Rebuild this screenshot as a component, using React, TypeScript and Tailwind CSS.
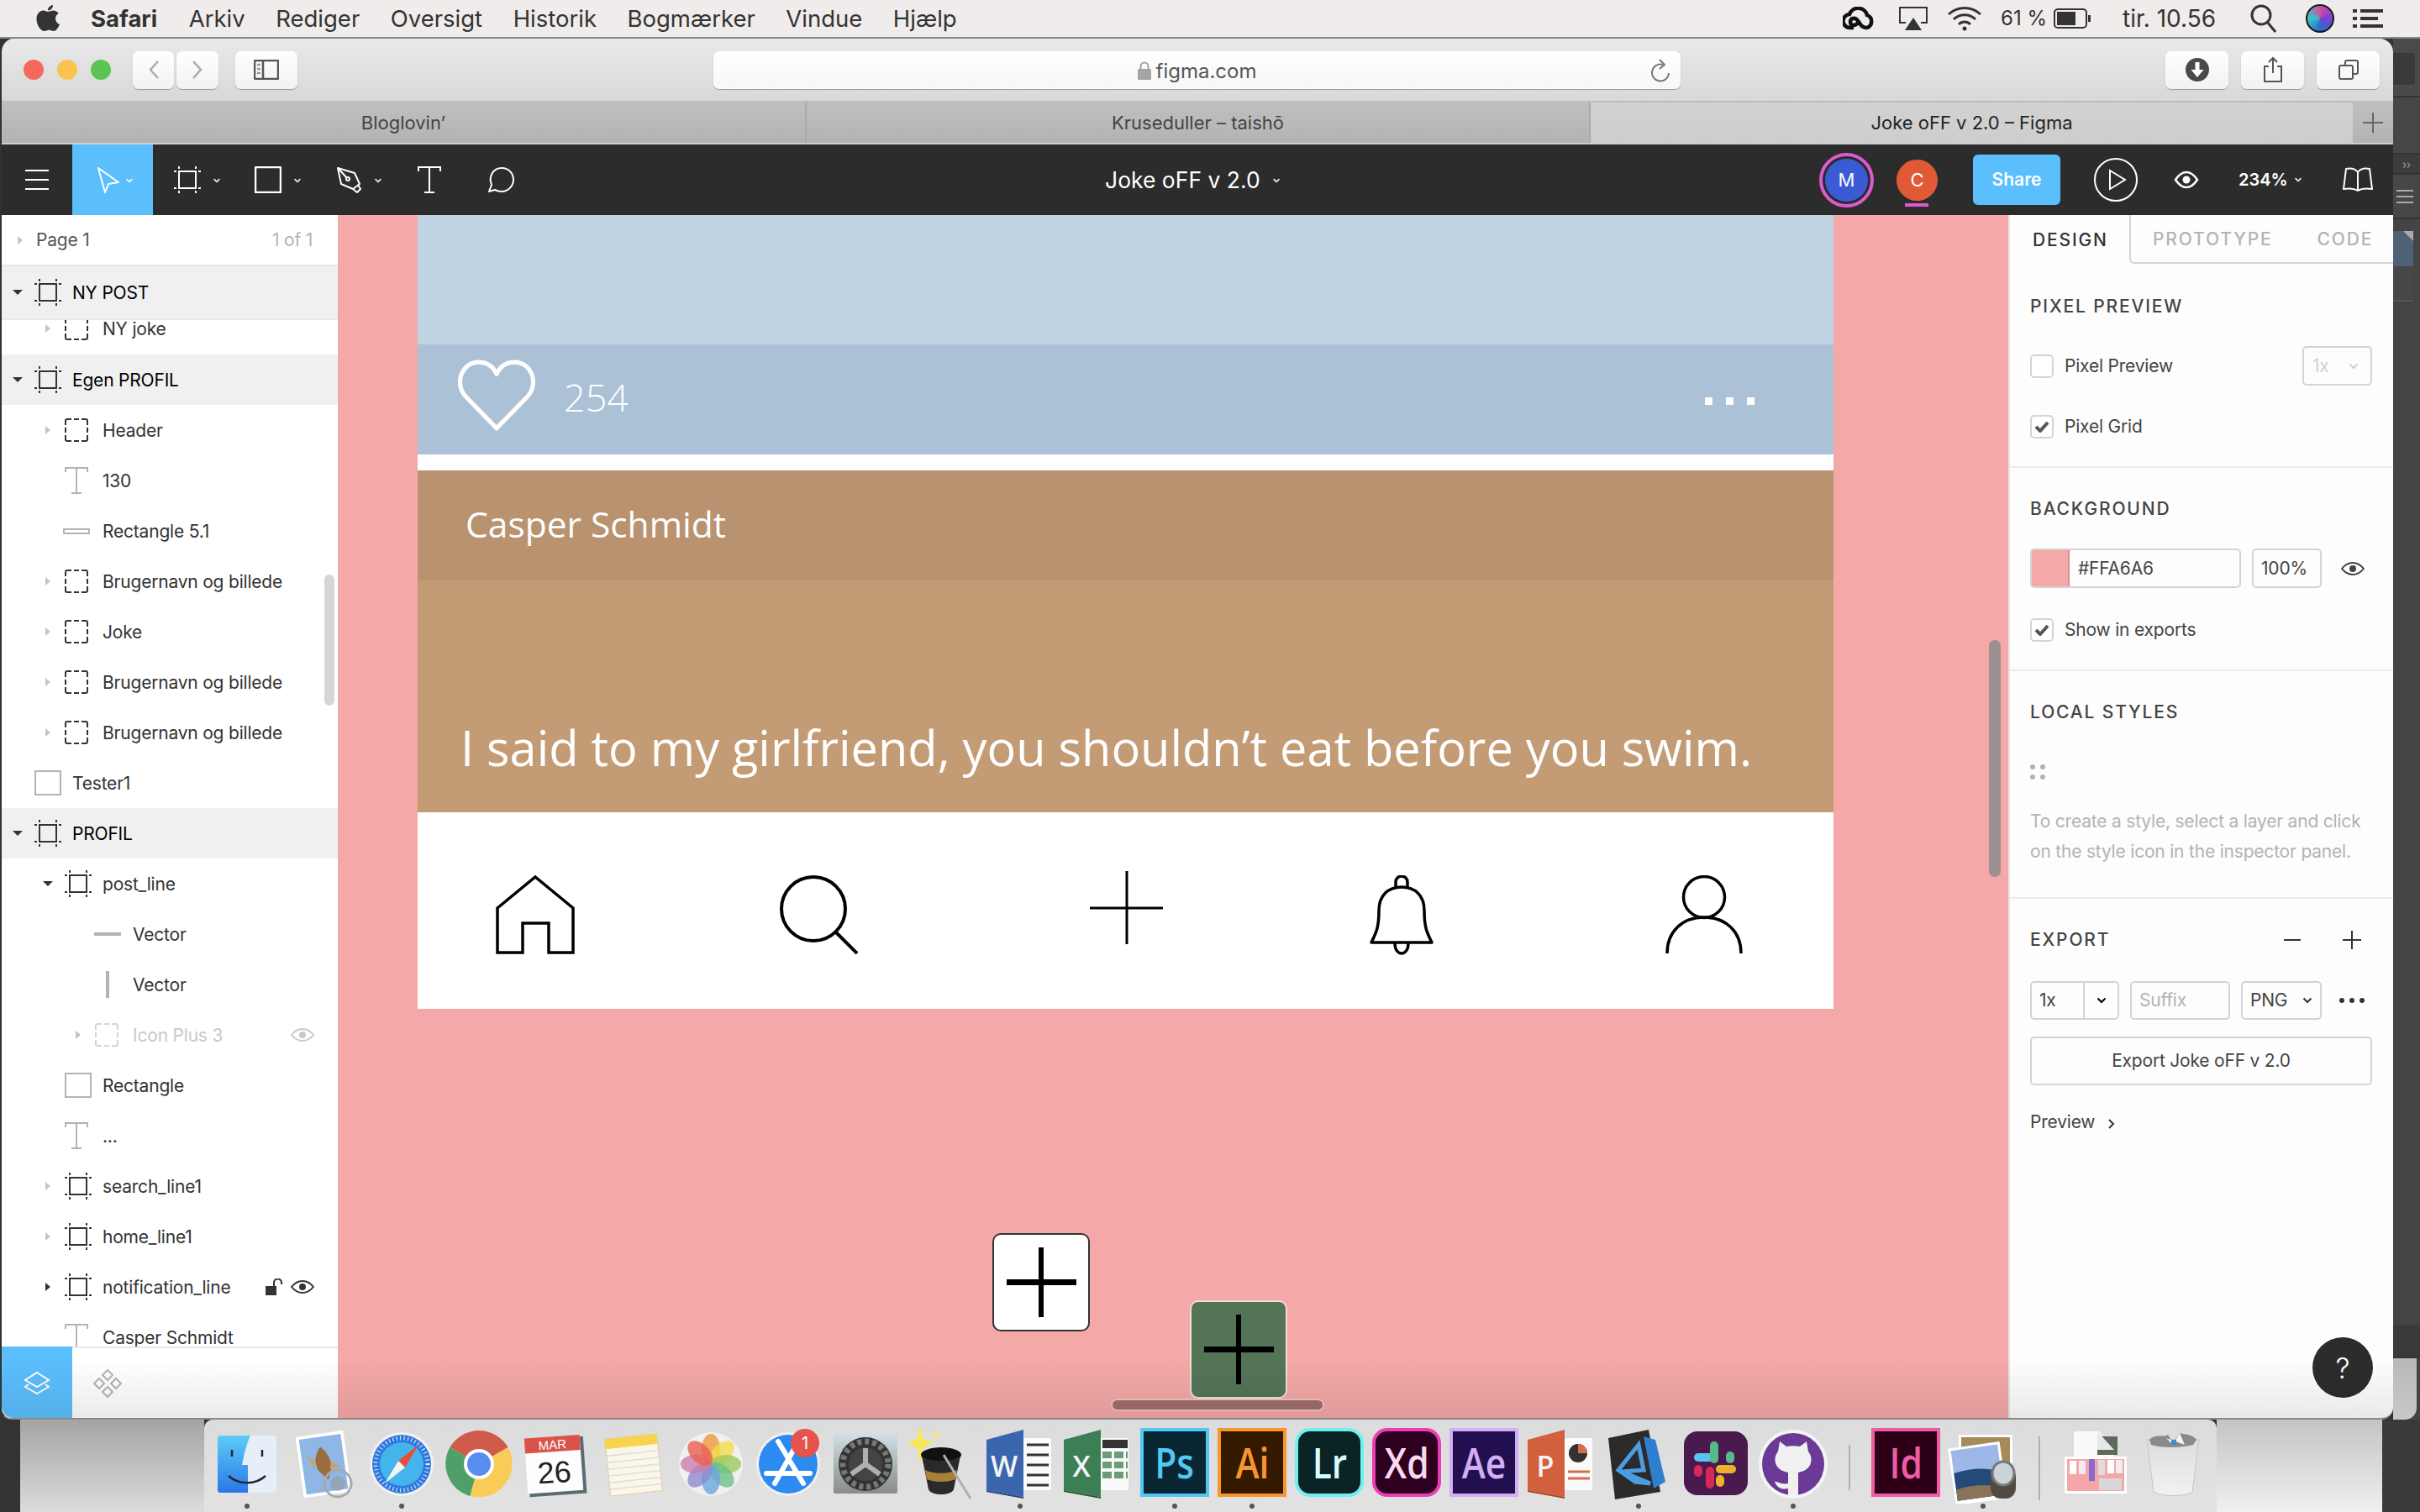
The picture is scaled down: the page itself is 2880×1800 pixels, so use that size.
import type { ReactNode } from "react";

const sans = "font-['Inter','Noto_Sans',sans-serif]";
const ui = "text-[21px] tracking-[-0.2px]";

const Caret = ({ className = "" }: { className?: string }) => (
    <svg width="12" height="8" viewBox="0 0 12 8" className={className} fill="none" stroke="currentColor" strokeWidth="2">
        <path d="M1.5 1.5 6 6l4.5-4.5" />
    </svg>
);

const Triangle = ({ open, tone = "text-[#c4c4c4]" }: { open?: boolean; tone?: string }) =>
    open ? (
        <svg width="12" height="8" viewBox="0 0 12 8" className="text-[#333]">
            <path d="M0 1h12L6 7z" fill="currentColor" />
        </svg>
    ) : (
        <svg width="12" height="12" viewBox="0 0 12 12" className={tone}>
            <path d="M3 1l6 5-6 5z" fill="currentColor" />
        </svg>
    );

const FrameIcon = ({ className = "text-[#333]" }: { className?: string }) => (
    <svg width="32" height="32" viewBox="0 0 32 32" className={className} fill="none" stroke="currentColor" strokeWidth="2">
        <rect x="6" y="6" width="20" height="20" />
        <path d="M0 6h3M29 6h3M0 26h3M29 26h3M6 0v3M26 0v3M6 29v3M26 29v3" />
    </svg>
);

const GroupIcon = ({ muted }: { muted?: boolean }) => (
    <svg width="28" height="28" viewBox="0 0 28 28" className={muted ? "text-[#d4d4d4]" : "text-[#333]"} fill="none" stroke="currentColor" strokeWidth="2">
        <path d="M1 8V3a2 2 0 0 1 2-2h5M11 1h6M20 1h5a2 2 0 0 1 2 2v5M27 11v6M27 20v5a2 2 0 0 1-2 2h-5M17 27h-6M8 27H3a2 2 0 0 1-2-2v-5M1 17v-6" />
    </svg>
);

const TextIcon = () => (
    <svg width="28" height="32" viewBox="0 0 28 32" className="text-[#b3b3b3]" fill="none" stroke="currentColor" strokeWidth="2">
        <path d="M1 6V1h26v5M14 1v30M8 31h12" />
    </svg>
);

const RectIcon = ({ w = 32 }: { w?: number }) => (
    <svg width={w} height="30" viewBox={`0 0 ${w} 30`} className="text-[#b3b3b3]" fill="none" stroke="currentColor" strokeWidth="2">
        <rect x="1" y="1" width={w - 2} height="28" />
    </svg>
);

const EyeIcon = ({ className = "text-[#333]" }: { className?: string }) => (
    <svg width="28" height="16" viewBox="0 0 28 16" className={className} fill="none" stroke="currentColor" strokeWidth="2">
        <path d="M1 8c4-5 8-7 13-7s9 2 13 7c-4 5-8 7-13 7S5 13 1 8z" />
        <circle cx="14" cy="8" r="4" fill="currentColor" stroke="none" />
    </svg>
);

type Expand = "open" | "closed" | "dark" | "none";

const LayerRow = ({
    indent,
    expand = "none",
    icon,
    label,
    head,
    muted,
    extras,
    tall,
}: {
    indent: string;
    expand?: Expand;
    icon: ReactNode;
    label: string;
    head?: boolean;
    muted?: boolean;
    extras?: ReactNode;
    tall?: boolean;
}) => (
    <div className={`flex ${tall ? "h-[62px]" : "h-[60px]"} shrink-0 items-center ${indent} ${head ? "bg-[#f0f0f0] text-black" : muted ? "text-[#c8c8c8]" : "text-[#333]"}`}>
        <span className="mr-[13px] flex w-[12px] justify-center">
            {expand === "open" && <Triangle open />}
            {expand === "closed" && <Triangle />}
            {expand === "dark" && <Triangle tone="text-[#333]" />}
        </span>
        <span className="flex w-[46px] items-center pl-[1px]">{icon}</span>
        <span className={`${ui} leading-none`}>{label}</span>
        {extras}
    </div>
);

const LeftPanel = () => (
    <div className={`relative flex w-[400px] shrink-0 flex-col bg-white ${sans}`}>
        <div className={`flex h-[61px] shrink-0 items-center border-b-2 border-[#e8e8e8] pl-[16px] pr-[30px] ${ui} text-[#555]`}>
            <Triangle />
            <span className="ml-[13px]">Page 1</span>
            <span className="ml-auto text-[#b3b3b3]">1 of 1</span>
        </div>
        <LayerRow tall indent="pl-[13px]" expand="open" head icon={<FrameIcon />} label="NY POST" />
        <div className="h-[43px] shrink-0 overflow-hidden border-t-2 border-[#e8e8e8]">
            <div className="-mt-[20px]">
                <LayerRow indent="pl-[49px]" expand="closed" icon={<GroupIcon />} label="NY joke" />
            </div>
        </div>
        <div className="flex-1 overflow-hidden">
            <LayerRow indent="pl-[13px]" expand="open" head icon={<FrameIcon />} label="Egen PROFIL" />
            <LayerRow indent="pl-[49px]" expand="closed" icon={<GroupIcon />} label="Header" />
            <LayerRow indent="pl-[49px]" icon={<TextIcon />} label="130" />
            <LayerRow
                indent="pl-[49px]"
                icon={<span className="-ml-[2px] block h-[7px] w-[32px] border-2 border-[#b3b3b3]" />}
                label="Rectangle 5.1"
            />
            <LayerRow indent="pl-[49px]" expand="closed" icon={<GroupIcon />} label="Brugernavn og billede" />
            <LayerRow indent="pl-[49px]" expand="closed" icon={<GroupIcon />} label="Joke" />
            <LayerRow indent="pl-[49px]" expand="closed" icon={<GroupIcon />} label="Brugernavn og billede" />
            <LayerRow indent="pl-[49px]" expand="closed" icon={<GroupIcon />} label="Brugernavn og billede" />
            <LayerRow indent="pl-[13px]" icon={<RectIcon />} label="Tester1" />
            <LayerRow indent="pl-[13px]" expand="open" head icon={<FrameIcon />} label="PROFIL" />
            <LayerRow indent="pl-[49px]" expand="open" icon={<FrameIcon />} label="post_line" />
            <LayerRow indent="pl-[85px]" icon={<span className="-ml-[1px] block h-[4px] w-[32px] bg-[#b3b3b3]" />} label="Vector" />
            <LayerRow indent="pl-[85px]" icon={<span className="ml-[13px] block h-[32px] w-[4px] bg-[#b3b3b3]" />} label="Vector" />
            <LayerRow
                indent="pl-[85px]"
                expand="closed"
                muted
                icon={<GroupIcon muted />}
                label="Icon Plus 3"
                extras={<EyeIcon className="ml-auto mr-[28px] text-[#c8c8c8]" />}
            />
            <LayerRow indent="pl-[49px]" icon={<RectIcon />} label="Rectangle" />
            <LayerRow indent="pl-[49px]" icon={<TextIcon />} label="..." />
            <LayerRow indent="pl-[49px]" expand="closed" icon={<FrameIcon />} label="search_line1" />
            <LayerRow indent="pl-[49px]" expand="closed" icon={<FrameIcon />} label="home_line1" />
            <LayerRow
                indent="pl-[49px]"
                expand="dark"
                icon={<FrameIcon />}
                label="notification_line"
                extras={
                    <span className="ml-auto mr-[28px] flex items-center gap-[10px]">
                        <svg width="20" height="20" viewBox="0 0 20 20" className="text-[#333]">
                            <rect x="0" y="9" width="13" height="11" fill="currentColor" />
                            <path d="M10 9V5a4.500 4.500 0 0 1 9 0v2" fill="none" stroke="currentColor" strokeWidth="2" />
                        </svg>
                        <EyeIcon />
                    </span>
                }
            />
            <LayerRow indent="pl-[49px]" icon={<TextIcon />} label="Casper Schmidt" />
        </div>
        <div className="flex h-[85px] shrink-0 border-t-2 border-[#e8e8e8] bg-white">
            <div className="-mt-[2px] flex h-[85px] w-[84px] items-center justify-center rounded-bl-[14px] bg-[#5bbefd]">
                <svg width="32" height="32" viewBox="0 0 32 32" fill="none" stroke="#fff" strokeWidth="2">
                    <path d="M16 4 30 13 16 21 2 13z" />
                    <path d="M6 18l-4 3 14 8 14-8-4-3" />
                </svg>
            </div>
            <div className="flex w-[84px] items-center justify-center">
                <svg width="38" height="38" viewBox="0 0 38 38" fill="none" stroke="#b3b3b3" strokeWidth="2">
                    <path d="M19 3l6 6-6 6-6-6zM9 13l6 6-6 6-6-6zM29 13l6 6-6 6-6-6zM19 23l6 6-6 6-6-6z" />
                </svg>
            </div>
        </div>
        <div className="absolute left-[384px] top-[428px] h-[156px] w-[12px] rounded-full bg-[#d6d6d6]" />
    </div>
);

const SectionTitle = ({ children }: { children: ReactNode }) => (
    <div className="text-[21px] font-medium leading-[26px] tracking-[1.85px] text-[#444]">{children}</div>
);

const Check = ({ on }: { on?: boolean }) => (
    <span className="flex h-[28px] w-[28px] items-center justify-center rounded-[5px] border-2 border-[#d4d4d4] bg-white">
        {on && (
            <svg width="18" height="14" viewBox="0 0 18 14" fill="none" stroke="#555" strokeWidth="4">
                <path d="M2 7l5 5 9-10" />
            </svg>
        )}
    </span>
);

const RightPanel = () => (
    <div className={`relative flex w-[458px] shrink-0 flex-col border-l-2 border-[#e6e6e6] bg-[#fdfdfd] text-[#444] ${sans}`}>
        <div className="flex h-[58px] shrink-0 items-center text-[21px] font-medium leading-none tracking-[1.85px]">
            <div className="flex h-full w-[142px] items-center pl-[27px] text-[#333]">DESIGN</div>
            <div className="flex h-full flex-1 items-center rounded-bl-[6px] border-b-2 border-l-2 border-[#d4d4d4] pl-[26px] text-[#b3b3b3]">
                <span>PROTOTYPE</span>
                <span className="ml-[53px]">CODE</span>
            </div>
        </div>

        <div className="h-[243px] shrink-0 border-b-2 border-[#ececec] pl-[24px] pr-[25px] pt-[38px]">
            <SectionTitle>PIXEL PREVIEW</SectionTitle>
            <div className={`mt-[34px] flex h-[47px] items-center ${ui}`}>
                <Check />
                <span className="ml-[13px]">Pixel Preview</span>
                <span className="ml-auto flex h-[47px] w-[83px] items-center justify-between rounded-[5px] border-2 border-[#d4d4d4] px-[10px] text-[#d0d0d0]">
                    1x
                    <Caret className="mr-[4px] text-[#d0d0d0]" />
                </span>
            </div>
            <div className={`mt-[35px] flex h-[28px] items-center ${ui}`}>
                <Check on />
                <span className="ml-[13px]">Pixel Grid</span>
            </div>
        </div>

        <div className="h-[242px] shrink-0 border-b-2 border-[#ececec] pl-[24px] pr-[25px] pt-[36px]">
            <SectionTitle>BACKGROUND</SectionTitle>
            <div className={`mt-[34px] flex h-[47px] items-center ${ui}`}>
                <div className="flex h-[47px] w-[251px] overflow-hidden rounded-[5px] border-2 border-[#d4d4d4]">
                    <span className="-m-[2px] mr-0 block w-[47px] rounded-l-[5px] border-2 border-[#dc8a8a] bg-[#f4a8a7]" />
                    <span className="ml-[10px] self-center">#FFA6A6</span>
                </div>
                <div className="ml-[13px] flex h-[47px] w-[83px] items-center rounded-[5px] border-2 border-[#d4d4d4] pl-[9px]">100%</div>
                <EyeIcon className="ml-[23px]" />
            </div>
            <div className={`mt-[36px] flex h-[28px] items-center ${ui}`}>
                <Check on />
                <span className="ml-[13px]">Show in exports</span>
            </div>
        </div>

        <div className="h-[271px] shrink-0 border-b-2 border-[#ececec] pl-[24px] pr-[25px] pt-[36px]">
            <SectionTitle>LOCAL STYLES</SectionTitle>
            <div className="mt-[49px] grid w-[18px] grid-cols-2 gap-x-[6px] gap-y-[6px]">
                <span className="h-[6px] w-[6px] rounded-full bg-[#b3b3b3]" />
                <span className="h-[6px] w-[6px] rounded-full bg-[#b3b3b3]" />
                <span className="h-[6px] w-[6px] rounded-full bg-[#b3b3b3]" />
                <span className="h-[6px] w-[6px] rounded-full bg-[#b3b3b3]" />
            </div>
            <p className={`mt-[32px] ${ui} leading-[36px] text-[#b3b3b3]`}>
                To create a style, select a layer and click on the style icon in the inspector panel.
            </p>
        </div>

        <div className="flex-1 pl-[24px] pr-[25px] pt-[36px]">
            <div className="flex h-[26px] items-center">
                <SectionTitle>EXPORT</SectionTitle>
                <span className="ml-auto block h-[2px] w-[20px] bg-[#333]" />
                <svg width="22" height="22" viewBox="0 0 22 22" className="ml-[50px] mr-[13px]" fill="none" stroke="#333" strokeWidth="2">
                    <path d="M0 11h22M11 0v22" />
                </svg>
            </div>
            <div className={`mt-[36px] flex h-[46px] items-center ${ui}`}>
                <div className="flex h-[46px] w-[106px] rounded-[5px] border-2 border-[#d4d4d4]">
                    <span className="flex w-[63px] items-center border-r-2 border-[#d4d4d4] pl-[9px]">1x</span>
                    <span className="flex flex-1 items-center justify-center">
                        <Caret className="text-black" />
                    </span>
                </div>
                <div className="ml-[13px] flex h-[46px] w-[119px] items-center rounded-[5px] border-2 border-[#d4d4d4] pl-[9px] text-[#b3b3b3]">Suffix</div>
                <div className="ml-[13px] flex h-[46px] w-[96px] items-center justify-between rounded-[5px] border-2 border-[#d4d4d4] px-[9px]">
                    PNG
                    <Caret className="text-[#333]" />
                </div>
                <span className="ml-[21px] flex gap-[6px]">
                    <span className="h-[6px] w-[6px] rounded-full bg-[#333]" />
                    <span className="h-[6px] w-[6px] rounded-full bg-[#333]" />
                    <span className="h-[6px] w-[6px] rounded-full bg-[#333]" />
                </span>
            </div>
            <div className={`mt-[20px] flex h-[58px] items-center justify-center rounded-[5px] border-2 border-[#d4d4d4] ${ui}`}>Export Joke oFF v 2.0</div>
            <div className={`mt-[31px] flex h-[26px] items-center ${ui}`}>
                Preview
                <svg width="8" height="12" viewBox="0 0 8 12" className="ml-[16px] mt-[4px]" fill="none" stroke="#333" strokeWidth="2">
                    <path d="M1 1l5 5-5 5" />
                </svg>
            </div>
        </div>

        <div className="absolute bottom-[24px] right-[24px] flex h-[72px] w-[72px] items-center justify-center rounded-full bg-[#2c2c2c] text-[34px] font-light text-white">
            ?
        </div>
    </div>
);

const PlusBars = () => (
    <span className="relative block h-[83px] w-[83px]">
        <span className="absolute left-0 top-[38px] h-[7px] w-[83px] bg-black" />
        <span className="absolute left-[38px] top-0 h-[83px] w-[6px] bg-black" />
    </span>
);

const Canvas = () => (
    <div className="relative min-w-0 flex-1 overflow-hidden bg-[#f4a8a7] pl-[95px]">
        <div className="w-[1685px]">
            <div className="h-[154px] bg-[#c0d3e2]" />
            <div className="flex h-[131px] items-center bg-[#abc1d6] pl-[45px] pr-[94px] font-['Open_Sans',sans-serif] font-light text-white">
                <svg width="98" height="88" viewBox="0 0 94 86" className="-mt-[9px]" fill="none" stroke="#fff" strokeWidth="5" strokeLinejoin="round">
                    <path d="M47 81 11 44C-3 28 7 4 26 4c10 0 17 5 21 14C51 9 58 4 68 4c19 0 29 24 15 40z" />
                </svg>
                <span className="-mt-[6px] ml-[31px] text-[45px] leading-none">254</span>
                <span className="ml-auto mt-[3px] flex gap-[16px]">
                    <span className="h-[9px] w-[9px] bg-white" />
                    <span className="h-[9px] w-[9px] bg-white" />
                    <span className="h-[9px] w-[9px] bg-white" />
                </span>
            </div>
            <div className="h-[19px] bg-white" />
            <div className="flex h-[131px] items-center bg-[#b9926f] pb-[4px] pl-[57px] font-['Open_Sans',sans-serif] text-[42.5px] text-white">Casper Schmidt</div>
            <div className="flex h-[276px] items-end bg-[#c39b75] pb-[38px] pl-[51px] font-['Open_Sans',sans-serif] text-[57.7px] leading-[78px] text-white">
                I said to my girlfriend, you shouldn’t eat before you swim.
            </div>
            <div className="flex h-[234px] items-start bg-white pt-[75px]">
                <svg width="94" height="94" viewBox="0 0 94 94" className="ml-[93px]" fill="none" stroke="#000" strokeWidth="3.500">
                    <path d="M2 92V39L47 2l45 37v53H63V57H32v35z" />
                </svg>
                <svg width="94" height="94" viewBox="0 0 94 94" className="ml-[244px]" fill="none" stroke="#000" strokeWidth="4">
                    <circle cx="40" cy="40" r="38" />
                    <path d="M67 68l25 25" />
                </svg>
                <svg width="87" height="87" viewBox="0 0 87 87" className="-mt-[5px] ml-[275px]" fill="none" stroke="#000" strokeWidth="3">
                    <path d="M0 44h87M44 0v87" />
                </svg>
                <svg width="76" height="96" viewBox="0 0 76 96" className="ml-[246px]" fill="none" stroke="#000" strokeWidth="3.500" strokeLinejoin="round">
                    <path d="M2 80c6-12 9-18 9-38C11 24 22 14 38 14s27 10 27 28c0 20 3 26 9 38z" />
                    <path d="M31 15V8a7 7 0 0 1 14 0v7M30 81c0 16 16 16 16 0" />
                </svg>
                <svg width="92" height="94" viewBox="0 0 92 94" className="ml-[276px]" fill="none" stroke="#000" strokeWidth="3.500">
                    <circle cx="46" cy="26" r="24.500" />
                    <path d="M2 93c0-26 18-43 44-43s44 17 44 43" />
                </svg>
            </div>
        </div>

        {/* loose frames on the canvas */}
        <div className="absolute left-[779px] top-[1212px] flex h-[117px] w-[116px] items-center justify-center rounded-[10px] border-2 border-[#333] bg-white">
            <PlusBars />
        </div>
        <div className="absolute left-[1014px] top-[1292px] flex h-[117px] w-[116px] items-center justify-center rounded-[10px] border-2 border-[#f2dcdc] bg-[#537556]">
            <PlusBars />
        </div>
        <div className="absolute left-[920px] top-[1409px] h-[15px] w-[254px] rounded-full border-2 border-[#f2c4c4] bg-[#9f6e6c]" />
        <div className="absolute left-[1965px] top-[506px] h-[282px] w-[14px] rounded-full bg-[#9b8f8f]" />
    </div>
);

const ToolGroup = ({ icon, pad = "pl-[25px]", caret = true }: { icon: ReactNode; pad?: string; caret?: boolean }) => (
    <div className={`flex h-full w-[96px] items-center ${pad}`}>
        {icon}
        {caret && <Caret className="ml-[14px] mt-[2px] h-[6px] w-[10px] text-white" />}
    </div>
);

const FigmaBar = () => (
    <div className={`flex h-[84px] shrink-0 items-center bg-[#2c2c2c] text-white ${sans}`}>
        <div className="ml-[28px] flex w-[28px] flex-col gap-[9px]">
            <span className="h-[2px] bg-white" />
            <span className="h-[2px] bg-white" />
            <span className="h-[2px] bg-white" />
        </div>
        <div className="ml-[28px] flex h-full w-[96px] items-center bg-[#5bbefd] pl-[29px]">
            <svg width="28" height="32" viewBox="0 0 28 32" fill="none" stroke="#fff" strokeWidth="2" strokeLinejoin="round">
                <path d="M2 2l24 17-12 2-4 10z" />
            </svg>
            <Caret className="ml-[6px] mt-[2px] h-[6px] w-[10px] text-white" />
        </div>
        <ToolGroup icon={<FrameIcon className="text-white" />} />
        <ToolGroup
            icon={
                <svg width="32" height="32" viewBox="0 0 32 32" fill="none" stroke="#fff" strokeWidth="2.500">
                    <rect x="1" y="1" width="30" height="30" />
                </svg>
            }
        />
        <ToolGroup
            icon={
                <svg width="32" height="32" viewBox="0 0 32 32" fill="none" stroke="#fff" strokeWidth="2" strokeLinejoin="round">
                    <path d="M3 2l20 6 6 13-8 6-14-6z" />
                    <path d="M3 2l11 12M21 27l5 4 4-4-3-5" />
                    <circle cx="15" cy="15" r="2" />
                </svg>
            }
        />
        <ToolGroup
            pad="pl-[27px]"
            caret={false}
            icon={
                <svg width="28" height="32" viewBox="0 0 28 32" fill="none" stroke="#fff" strokeWidth="2">
                    <path d="M1 6V1h26v5M14 1v30M8 31h12" />
                </svg>
            }
        />
        <ToolGroup
            pad="pl-[14px]"
            caret={false}
            icon={
                <svg width="32" height="32" viewBox="0 0 32 32" fill="none" stroke="#fff" strokeWidth="2" strokeLinejoin="round">
                    <path d="M2 30l3-8C1 12 7 2 17 2c9 0 14 7 14 14s-6 14-14 14c-3 0-6-1-8-2z" />
                </svg>
            }
        />
        <div className="ml-[653px] flex items-center text-[26.500px] leading-none">
            Joke oFF v 2.0
            <Caret className="ml-[14px] mt-[2px] h-[6px] w-[10px] text-white" />
        </div>
        <div className="ml-auto flex items-center pr-[24px]">
            <span className="flex h-[65px] w-[65px] items-center justify-center rounded-full border-[4px] border-[#dc5ad0] p-[3px]">
                <span className="flex h-full w-full items-center justify-center rounded-full bg-[#3b5bd5] text-[22px]">M</span>
            </span>
            <span className="relative ml-[27px] flex h-[49px] w-[49px] items-center justify-center rounded-full bg-[#e05a36] text-[22px]">
                C
                <span className="absolute left-[10px] top-[52px] h-[4px] w-[28px] bg-[#dc5ad0]" />
            </span>
            <span className="ml-[42px] flex h-[60px] w-[104px] items-center justify-center rounded-[6px] bg-[#5bbefd] text-[21px] font-semibold">Share</span>
            <svg width="52" height="52" viewBox="0 0 52 52" className="ml-[40px]" fill="none" stroke="#fff" strokeWidth="2">
                <circle cx="26" cy="26" r="25" />
                <path d="M19 15l18 11-18 11z" />
            </svg>
            <svg width="30" height="24" viewBox="0 0 30 24" className="ml-[43px]" fill="none" stroke="#fff" strokeWidth="2.500">
                <path d="M2 12c4-6 8-9 13-9s9 3 13 9c-4 6-8 9-13 9S6 18 2 12z" />
                <circle cx="15" cy="12" r="4.500" fill="#fff" stroke="none" />
            </svg>
            <span className="ml-[47px] w-[58px] text-[20px] font-semibold leading-none">234%</span>
            <Caret className="ml-[8px] h-[6px] w-[10px] text-white" />
            <svg width="36" height="30" viewBox="0 0 36 30" className="ml-[48px]" fill="none" stroke="#fff" strokeWidth="2" strokeLinejoin="round">
                <path d="M18 6C15 2 9 1 4 2L1 26c6-1 12-1 17 2 5-3 11-3 17-2L32 2c-5-1-11 0-14 4zM18 6v22" />
            </svg>
        </div>
    </div>
);

const NavButton = ({ w, children }: { w: string; children?: ReactNode }) => (
    <span className={`flex h-[45px] ${w} items-center justify-center rounded-[7px] bg-linear-to-b from-white to-[#f2f2f2] shadow-[0_1px_1px_rgba(0,0,0,0.3)]`}>{children}</span>
);

const SafariChrome = () => (
    <>
        <div className={`flex h-[76px] shrink-0 items-center border-b-2 border-[#bdbdbd] bg-linear-to-b from-[#e9e9e9] to-[#d8d8d8] ${sans}`}>
            <span className="ml-[26px] h-[24px] w-[24px] rounded-full bg-[#f3695c]" />
            <span className="ml-[16px] h-[24px] w-[24px] rounded-full bg-[#f8c34f]" />
            <span className="ml-[16px] h-[24px] w-[24px] rounded-full bg-[#5cc454]" />
            <span className="ml-[26px] flex gap-[3px]">
                <NavButton w="w-[49px]">
                    <svg width="14" height="24" viewBox="0 0 14 24" fill="none" stroke="#aaa" strokeWidth="2.500">
                        <path d="M12 2 3 12l9 10" />
                    </svg>
                </NavButton>
                <NavButton w="w-[50px]">
                    <svg width="14" height="24" viewBox="0 0 14 24" fill="none" stroke="#aaa" strokeWidth="2.500">
                        <path d="M2 2l9 10-9 10" />
                    </svg>
                </NavButton>
            </span>
            <span className="ml-[20px]">
                <NavButton w="w-[74px]">
                    <svg width="30" height="24" viewBox="0 0 30 24" fill="none" stroke="#555" strokeWidth="2.500">
                        <rect x="1" y="1" width="28" height="22" rx="1" />
                        <path d="M11 1v22" />
                        <path d="M4 6h4M4 11h4M4 16h4" stroke="#999" />
                    </svg>
                </NavButton>
            </span>
            <div className="relative ml-[495px] flex h-[45px] w-[1151px] items-center justify-center rounded-[7px] bg-linear-to-b from-white to-[#f7f7f7] pt-[3px] text-[24px] text-[#555] shadow-[0_1px_1px_rgba(0,0,0,0.3)]">
                <svg width="16" height="22" viewBox="0 0 16 22" className="mr-[6px] -mt-[2px]">
                    <rect x="0" y="9" width="16" height="13" rx="1" fill="#a4a4a4" />
                    <path d="M3.500 9V6a4.500 4.500 0 0 1 9 0v3" fill="none" stroke="#a4a4a4" strokeWidth="2" />
                </svg>
                figma.com
                <svg width="24" height="28" viewBox="0 0 24 28" className="absolute right-[12px] top-[9px]" fill="none" stroke="#777" strokeWidth="2">
                    <path d="M15 7a10 10 0 1 0 7 10" />
                    <path d="M11 1l6 6-6 5" />
                </svg>
            </div>
            <span className="ml-auto mr-[16px] flex gap-[15px]">
                <NavButton w="w-[75px]">
                    <svg width="30" height="30" viewBox="0 0 30 30">
                        <circle cx="15" cy="15" r="14" fill="#4a4a4a" />
                        <path d="M12.500 6h5v9h5L15 24 7.500 15h5z" fill="#fff" />
                    </svg>
                </NavButton>
                <NavButton w="w-[75px]">
                    <svg width="24" height="32" viewBox="0 0 24 32" fill="none" stroke="#555" strokeWidth="2">
                        <path d="M7 12H2v18h20V12h-5M12 20V2M7 7l5-5 5 5" />
                    </svg>
                </NavButton>
                <NavButton w="w-[75px]">
                    <svg width="24" height="24" viewBox="0 0 24 24" fill="none" stroke="#555" strokeWidth="2">
                        <rect x="1" y="7" width="16" height="16" rx="2" />
                        <path d="M8 7V3a2 2 0 0 1 2-2h11a2 2 0 0 1 2 2v12a2 2 0 0 1-2 2h-4" />
                    </svg>
                </NavButton>
            </span>
        </div>
        <div className={`flex h-[50px] shrink-0 border-b-2 border-[#cfcfcf] bg-linear-to-b from-[#bfbfbf] to-[#b3b3b3] text-[22px] text-[#444] ${sans}`}>
            <div className="flex w-[958px] items-center justify-center border-r-2 border-[#a9a9a9]">Bloglovin’</div>
            <div className="flex w-[933px] items-center justify-center border-r-2 border-[#a9a9a9]">Kruseduller – taishō</div>
            <div className="flex w-[907px] items-center justify-center bg-linear-to-b from-[#d2d2d2] to-[#cdcdcd] text-[#222]">Joke oFF v 2.0 – Figma</div>
            <div className="flex flex-1 items-center justify-center">
                <svg width="24" height="24" viewBox="0 0 24 24" fill="none" stroke="#666" strokeWidth="2">
                    <path d="M0 12h24M12 0v24" />
                </svg>
            </div>
        </div>
    </>
);

const MenuBar = () => (
    <div className={`flex h-[46px] shrink-0 items-center border-b-2 border-[#8e8585] bg-[#f0ecec] text-[27.500px] leading-none text-[#333] ${sans}`}>
        <svg width="30" height="32" viewBox="0 0 30 32" className="ml-[42px] -mt-[3px] text-[#333]">
            <path
                fill="currentColor"
                d="M21 1c.3 3-2.500 6.500-6 6.500C14.600 4.500 17.800 1.200 21 1zM15.200 9c1.700 0 3.500-1.500 6.200-1.500 2.300 0 4.700 1.200 6.300 3.400-5.500 3-4.600 10.900 1.300 13.100-1.400 3.500-4.200 8-7 8-2 0-3-1.300-5.500-1.300-2.600 0-3.700 1.300-5.600 1.300C6.300 32 1.500 24.500 1.500 17.500c0-6.300 4-10 8-10 2.500 0 4.200 1.500 5.700 1.500z"
            />
        </svg>
        <div className="ml-[36px] flex items-center gap-[36.500px] pt-[2px]">
            <span className="font-bold">Safari</span>
            <span className="ml-[1px]">Arkiv</span>
            <span>Rediger</span>
            <span>Oversigt</span>
            <span>Historik</span>
            <span>Bogmærker</span>
            <span>Vindue</span>
            <span>Hjælp</span>
        </div>
        <div className="ml-auto flex items-center pr-[44px]">
            <svg width="38" height="28" viewBox="0 0 38 28" fill="none" stroke="#111" strokeWidth="4.500">
                <path d="M13 25H9a8 8 0 0 1-1-16 11 11 0 0 1 21 1 8 8 0 0 1 0 15c-5 0-7-2-10-7-2-3-4-5-7-4-4 1-4 7 0 8 3 .5 5-1 7-4" />
            </svg>
            <svg width="36" height="30" viewBox="0 0 36 30" className="ml-[28px]">
                <path d="M9 20H2V2h32v18h-7" fill="none" stroke="#333" strokeWidth="2" />
                <path d="M18 14l10 15H8z" fill="#333" />
            </svg>
            <svg width="42" height="32" viewBox="0 0 42 32" className="ml-[22px]" fill="none" stroke="#333" strokeWidth="3">
                <path d="M2 11c11-10 27-10 38 0M8 17c7-7 19-7 26 0M14 23c4-4 10-4 14 0" />
                <circle cx="21" cy="28" r="2.500" fill="#333" stroke="none" />
            </svg>
            <span className="ml-[22px] text-[24px]">61 %</span>
            <svg width="44" height="24" viewBox="0 0 44 24" className="ml-[8px]">
                <rect x="1" y="1" width="38" height="22" rx="4" fill="none" stroke="#333" strokeWidth="2" />
                <rect x="4" y="4" width="22" height="16" fill="#333" />
                <rect x="41" y="8" width="3" height="8" fill="#333" />
            </svg>
            <span className="ml-[38px] w-[112px] text-[28px]">tir. 10.56</span>
            <svg width="32" height="34" viewBox="0 0 32 34" className="ml-[40px]" fill="none" stroke="#333" strokeWidth="3">
                <circle cx="13" cy="13" r="11" />
                <path d="M20 21l10 12" />
            </svg>
            <span className="ml-[34px] block h-[34px] w-[34px] rounded-full border-2 border-[#1a1a1a] bg-[conic-gradient(#d24fa0,#7a3fd0,#2f6bd0,#34c6c8,#d24fa0)]" />
            <span className="ml-[22px] flex w-[36px] flex-col gap-[5px]">
                <span className="h-[4px] bg-[linear-gradient(90deg,#333_5px,transparent_5px,transparent_9px,#333_9px)]" />
                <span className="h-[4px] w-[30px] bg-[linear-gradient(90deg,#333_5px,transparent_5px,transparent_9px,#333_9px)]" />
                <span className="h-[4px] bg-[linear-gradient(90deg,#333_5px,transparent_5px,transparent_9px,#333_9px)]" />
            </span>
        </div>
    </div>
);

const BehindApp = () => (
    <div className="flex flex-1 flex-col bg-[#444]">
        <div className="h-[70px] shrink-0 border-b-2 border-[#333] bg-[#4a4a4a] pt-[17px]">
            <div className="h-[38px] w-[26px] rounded-r-[4px] bg-[#3a3a3a]" />
        </div>
        <div className="h-[68px] shrink-0 border-b-2 border-[#333] bg-[#474747]" />
        <div className="flex h-[24px] shrink-0 items-center justify-center border-b-2 border-[#333] bg-[#3d3d3d] text-[16px] leading-none text-[#999]">››</div>
        <div className="flex h-[53px] shrink-0 flex-col justify-center gap-[5px] border-b-2 border-[#333] bg-[#474747] pl-[4px] pr-[8px]">
            <span className="h-[2px] bg-[#aaa]" />
            <span className="h-[2px] bg-[#aaa]" />
            <span className="h-[2px] bg-[#aaa]" />
        </div>
        <div className="relative mt-[14px] h-[42px] w-[24px] shrink-0 bg-[#4f6174]">
            <span className="absolute right-0 top-0 h-0 w-0 border-l-[12px] border-t-[12px] border-l-transparent border-t-[#aaa]" />
        </div>
        <div className="h-[42px] w-[24px] shrink-0 border-b-2 border-[#555] bg-[#474747]" />
        <div className="min-h-0 flex-1 bg-[#444]" />
        <div className="h-[40px] shrink-0 border-b-2 border-[#333] bg-[#3a3a3a]" />
        <div className="mr-[4px] h-[73px] shrink-0 rounded-br-[14px] bg-linear-to-b from-[#b8b8b8] to-[#c9c9c9]" />
    </div>
);

/* ---------- dock ---------- */

const DockItem = ({ dot, children }: { dot?: boolean; children: ReactNode }) => (
    <div className="flex h-full w-[92px] shrink-0 flex-col items-center pt-[10px]">
        <div className="h-[90px] w-[92px]">{children}</div>
        <span className={`h-[6px] w-[6px] rounded-full ${dot ? "bg-[#555]" : ""}`} />
    </div>
);

const AdobeTile = ({ label, box, text, round }: { label: string; box: string; text: string; round?: boolean }) => (
    <div className={`ml-[5px] flex h-[82px] w-[82px] items-center justify-center overflow-hidden border-[4px] ${round ? "rounded-[18px]" : ""} ${box}`}>
        <span className={`origin-center scale-x-[0.85] font-['Open_Sans',sans-serif] text-[50px] font-semibold leading-none ${text}`}>{label}</span>
    </div>
);

const svgBox = { width: 92, height: 90, viewBox: "0 0 92 90" };

const Finder = () => (
    <svg {...svgBox}>
        <defs>
            <linearGradient id="fnd" x1="0" y1="0" x2="0" y2="1">
                <stop offset="0" stopColor="#5dcdf6" />
                <stop offset="1" stopColor="#2a77e8" />
            </linearGradient>
        </defs>
        <rect x="11" y="9" width="70" height="68" rx="3" fill="#e6eff8" />
        <path d="M14 9h36c-6 14-8 25-10 35h7v33H14a3 3 0 0 1-3-3V12a3 3 0 0 1 3-3z" fill="url(#fnd)" />
        <path d="M28 26v8M64 26v8" stroke="#1b2a3d" strokeWidth="2.500" />
        <path d="M24 57c12 11 32 11 44 0" stroke="#1b2a3d" strokeWidth="2.500" fill="none" />
    </svg>
);

const MailStamp = () => (
    <svg {...svgBox}>
        <g transform="rotate(-8 46 43)">
            <rect x="16" y="6" width="58" height="74" fill="#fff" stroke="#ddd" strokeDasharray="3 2" />
            <rect x="20" y="10" width="50" height="66" fill="#8eb7e6" />
            <path d="M44 22c10 10 12 22 8 32l-4 8-10-12c-4-10-2-20 6-28z" fill="#9a6e3c" />
            <path d="M36 38l-10-8 8 18zM54 40l10 8-12 2z" fill="#c9a36a" />
        </g>
        <circle cx="62" cy="66" r="16" fill="none" stroke="#a9a9a9" strokeWidth="3" />
        <circle cx="62" cy="66" r="9" fill="#9a9a9a" opacity="0.6" />
    </svg>
);

const SafariIcon = () => (
    <svg {...svgBox}>
        <circle cx="46" cy="43" r="38" fill="#f2f2f2" />
        <circle cx="46" cy="43" r="35" fill="#2f78e0" />
        <circle cx="46" cy="43" r="26" fill="#43b5ea" />
        <circle cx="46" cy="43" r="31" fill="none" stroke="#fff" strokeWidth="5" strokeDasharray="1 3.500" opacity="0.9" />
        <path d="M66 20 50 47 42 39z" fill="#ea4a3c" />
        <path d="M26 66 42 39 50 47z" fill="#f4f4f4" />
    </svg>
);

const Chrome = () => (
    <svg {...svgBox}>
        <path d="M46 43 11.400 23a40 40 0 0 1 69.200 0z" fill="#cf5b4b" />
        <path d="M46 43 11.400 23a40 40 0 0 0 24 58z" fill="#4f9f68" />
        <path d="M46 43 35.400 81A40 40 0 0 0 80.600 23z" fill="#f8cc57" />
        <circle cx="46" cy="43" r="18" fill="#fff" />
        <circle cx="46" cy="43" r="14" fill="#5a8df0" />
    </svg>
);

const Calendar = () => (
    <svg {...svgBox}>
        <g transform="rotate(-4 46 43)">
            <rect x="12" y="12" width="68" height="68" fill="#5c6a72" />
            <rect x="10" y="10" width="66" height="66" fill="#fdfdfd" />
            <rect x="10" y="10" width="66" height="18" fill="#d9534a" />
            <text x="43" y="25" textAnchor="middle" fontFamily="Liberation Sans, sans-serif" fontSize="15" fill="#fff">MAR</text>
            <text x="43" y="65" textAnchor="middle" fontFamily="Liberation Sans, sans-serif" fontSize="36" fill="#222">26</text>
        </g>
    </svg>
);

const Notes = () => (
    <svg {...svgBox}>
        <g transform="rotate(-6 46 43)">
            <rect x="15" y="10" width="62" height="68" fill="#fbf7e8" stroke="#d8cfa8" />
            <rect x="15" y="10" width="62" height="12" fill="#f8d34c" />
            <path d="M15 30h62M15 38h62M15 46h62M15 54h62M15 62h62M15 70h62" stroke="#ddd" strokeWidth="1.500" />
        </g>
    </svg>
);

const petals = ["#f09a3c", "#f4dc4c", "#9cc85c", "#6cc088", "#6ca8dc", "#8c8cd0", "#c880b0", "#e86050"];

const Photos = () => (
    <svg {...svgBox}>
        <circle cx="46" cy="43" r="38" fill="#f0f0f0" />
        {petals.map((c, i) => (
            <ellipse key={c} cx="46" cy="25" rx="11" ry="18" fill={c} opacity="0.8" transform={`rotate(${i * 45} 46 43)`} />
        ))}
    </svg>
);

const AppStore = () => (
    <svg {...svgBox} className="overflow-visible">
        <circle cx="46" cy="43" r="38" fill="#f0f0f0" />
        <circle cx="46" cy="43" r="35" fill="#2c8bf0" />
        <path d="M34 16l30 50M58 16 30 66M20 54h52" stroke="#fff" strokeWidth="6" strokeLinecap="round" fill="none" />
        <circle cx="66" cy="18" r="17" fill="#e5534b" />
        <text x="66" y="25" textAnchor="middle" fontFamily="Inter, sans-serif" fontSize="20" fill="#fff">1</text>
    </svg>
);

const Prefs = () => (
    <svg {...svgBox}>
        <defs>
            <linearGradient id="prf" x1="0" y1="0" x2="0" y2="1">
                <stop offset="0" stopColor="#cfe0e6" />
                <stop offset="1" stopColor="#8a8a8a" />
            </linearGradient>
        </defs>
        <rect x="8" y="7" width="76" height="71" rx="2" fill="url(#prf)" />
        <circle cx="46" cy="43" r="32" fill="#333" />
        <circle cx="46" cy="43" r="27" fill="none" stroke="#777" strokeWidth="7" strokeDasharray="5 4" />
        <circle cx="46" cy="43" r="20" fill="#444" />
        <path d="M46 43V24M46 43 29 55M46 43l17 12" stroke="#b0b0b0" strokeWidth="6" />
    </svg>
);

const Hat = () => (
    <svg {...svgBox}>
        <path d="M19 -8l3 20 12 6-12 6-3 20-3-20-12-6 12-6z" fill="#f8e65c" />
        <path d="M38 0l1 7 6 1-6 1-1 9-1-9-6-1 6-1z" fill="#f8e65c" />
        <ellipse cx="44" cy="32" rx="24" ry="9" fill="#111" />
        <path d="M21 33l8 40c3 8 27 8 30 0l8-40c-6 8-40 8-46 0z" fill="#2a2a2a" />
        <path d="M25 50c10 5 28 5 38 0l-2 11c-8 4-26 4-34 0z" fill="#a5813a" />
        <path d="M47 32l32 52" stroke="#b0b0b0" strokeWidth="3" />
    </svg>
);

const Office = ({ letter, cover, dark, rows }: { letter: string; cover: string; dark: string; rows: ReactNode }) => (
    <svg {...svgBox}>
        <rect x="46" y="12" width="37" height="62" fill="#fafafa" />
        {rows}
        <path d="M6 14l44-12v80L6 74z" fill={cover} />
        <path d="M6 74l44 8v2L6 76z" fill={dark} />
        <text x="27" y="58" textAnchor="middle" fontFamily="Open Sans, sans-serif" fontSize="34" fontWeight="600" fill="#f4f4f4">{letter}</text>
    </svg>
);

const wordRows = <path d="M54 20h26M54 32h26M54 44h26M54 56h26M54 68h26" stroke="#333" strokeWidth="3" />;
const excelRows = (
    <>
        <rect x="52" y="14" width="30" height="10" fill="#333" />
        <path d="M52 32h30M52 44h30M52 56h30" stroke="#6c9b78" strokeWidth="8" strokeDasharray="11 3" />
    </>
);
const pptRows = (
    <>
        <circle cx="66" cy="30" r="11" fill="#333" />
        <path d="M66 19a11 11 0 0 1 11 11H66z" fill="#d96a4a" />
        <path d="M54 52h26M54 60h26" stroke="#d96a4a" strokeWidth="3" />
    </>
);

const VSCode = () => (
    <svg {...svgBox}>
        <path d="M10 12 58 2l14 74-54 9z" fill="#2b2b2b" />
        <path d="M52 10l14 4 12 50-14 8z" fill="#2f7fd0" />
        <path d="M22 50 46 20l6 30-26 2 34 14-18-2z" fill="none" stroke="#4a9de0" strokeWidth="5" />
    </svg>
);

const Slack = () => (
    <svg {...svgBox}>
        <rect x="8" y="4" width="76" height="76" rx="16" fill="#4a1a4e" />
        <rect x="20" y="30" width="24" height="10" rx="5" fill="#5bc4ee" />
        <rect x="39" y="16" width="10" height="26" rx="5" fill="#55b98a" />
        <rect x="58" y="28" width="10" height="14" rx="5" fill="#55b98a" />
        <rect x="46" y="44" width="24" height="10" rx="5" fill="#ecb22e" />
        <rect x="46" y="56" width="10" height="14" rx="5" fill="#ecb22e" />
        <rect x="34" y="46" width="10" height="26" rx="5" fill="#d8285a" />
        <rect x="20" y="44" width="10" height="14" rx="5" fill="#d8285a" />
    </svg>
);

const GitHub = () => (
    <svg {...svgBox}>
        <circle cx="46" cy="43" r="41" fill="#f4f4f4" />
        <circle cx="46" cy="43" r="37" fill="#6a3a96" />
        <path d="M30 16l8 6c5-1 11-1 16 0l8-6 2 12c4 5 5 12 1 18-3 4-8 6-13 7v27H40v-8c-8 2-13-1-16-8 2-1 8 4 16 2v-13c-5-1-10-3-13-7-4-6-3-13 1-18z" fill="#f0f0f0" />
    </svg>
);

const Preview = () => (
    <svg {...svgBox}>
        <rect x="17" y="8" width="64" height="55" fill="#fff" />
        <rect x="20" y="11" width="58" height="40" fill="#a68a5a" />
        <g transform="rotate(-8 40 50)">
            <rect x="8" y="20" width="62" height="68" fill="#fff" />
            <rect x="11" y="23" width="56" height="60" fill="#9db8e8" />
            <path d="M11 50c20-4 40-2 56 6v27H11z" fill="#244a7a" />
            <path d="M11 70c16-4 36-2 56 4v9H11z" fill="#8a7458" />
        </g>
        <rect x="55" y="46" width="30" height="38" rx="12" fill="#514a42" />
        <ellipse cx="70" cy="54" rx="13" ry="14" fill="#c8d4d8" stroke="#777" strokeWidth="3" />
    </svg>
);

const DocStack = () => (
    <svg {...svgBox}>
        <path d="M20 4h30l18 22v52H20z" fill="#fafafa" />
        <rect x="48" y="10" width="24" height="22" fill="#5c6a58" />
        <path d="M48 4l20 22H48z" fill="#e8e8e8" />
        <rect x="9" y="34" width="74" height="44" fill="#fff" />
        <rect x="12" y="37" width="68" height="38" fill="#f5a6a6" />
        <rect x="15" y="39" width="8" height="16" fill="#fff" />
        <rect x="26" y="39" width="8" height="16" fill="#eee" />
        <rect x="38" y="37" width="7" height="26" fill="#8a6ad0" />
        <rect x="49" y="38" width="8" height="18" fill="#ddd" />
        <rect x="60" y="38" width="8" height="16" fill="#fff" />
        <rect x="70" y="38" width="8" height="16" fill="#eee" />
        <rect x="50" y="60" width="27" height="14" fill="#d8d8d8" />
    </svg>
);

const Trash = () => (
    <svg {...svgBox}>
        <defs>
            <linearGradient id="trs" x1="0" y1="0" x2="0" y2="1">
                <stop offset="0" stopColor="#dcdcdc" />
                <stop offset="1" stopColor="#f2f2f2" />
            </linearGradient>
        </defs>
        <path d="M15 14h62l-8 62c-8 6-38 6-46 0z" fill="url(#trs)" stroke="#c6c6c6" />
        <path d="M18 14c8-8 16-2 22-6l6 10 8-12c8 2 16 2 20 8l-4 6c-16 4-38 4-50 0z" fill="#8a8a8a" />
        <path d="M38 12l8 8 8-14 6 14" fill="#f4f4f4" />
        <rect x="44" y="14" width="6" height="6" fill="#3a8ed0" />
    </svg>
);

const Dock = () => (
    <div className="flex h-full w-[2395px] shrink-0 rounded-t-[10px] bg-linear-to-b from-[#dcdcdc] to-[#e2e2e2] pl-[5px]">
        <DockItem dot><Finder /></DockItem>
        <DockItem><MailStamp /></DockItem>
        <DockItem dot><SafariIcon /></DockItem>
        <DockItem><Chrome /></DockItem>
        <DockItem><Calendar /></DockItem>
        <DockItem><Notes /></DockItem>
        <DockItem><Photos /></DockItem>
        <DockItem><AppStore /></DockItem>
        <DockItem><Prefs /></DockItem>
        <DockItem><Hat /></DockItem>
        <DockItem dot><Office letter="W" cover="#3a66ae" dark="#27477a" rows={wordRows} /></DockItem>
        <DockItem><Office letter="X" cover="#3c7f54" dark="#28573a" rows={excelRows} /></DockItem>
        <DockItem dot><AdobeTile label="Ps" box="border-[#50c8f4] bg-[#0a2633]" text="text-[#50c8f4]" /></DockItem>
        <DockItem dot><AdobeTile label="Ai" box="border-[#f7962e] bg-[#351a00]" text="text-[#f7962e]" /></DockItem>
        <DockItem><AdobeTile label="Lr" round box="border-[#6ff0f0] bg-[#0a2425]" text="text-[#d8fbfb]" /></DockItem>
        <DockItem><AdobeTile label="Xd" round box="border-[#ee3cb4] bg-[#2c001e]" text="text-[#fbd8f0]" /></DockItem>
        <DockItem><AdobeTile label="Ae" box="border-[#d2aef4] bg-[#220f50]" text="text-[#d2aef4]" /></DockItem>
        <DockItem><Office letter="P" cover="#d2603c" dark="#a0452a" rows={pptRows} /></DockItem>
        <DockItem dot><VSCode /></DockItem>
        <DockItem><Slack /></DockItem>
        <DockItem dot><GitHub /></DockItem>
        <div className="flex h-full w-[42px] shrink-0 justify-center pt-[30px]">
            <span className="h-[54px] w-[2px] bg-[#b0b0b0]" />
        </div>
        <DockItem><AdobeTile label="Id" box="border-[#ee5ca5] bg-[#2d0018]" text="text-[#ee5ca5]" /></DockItem>
        <DockItem dot><Preview /></DockItem>
        <div className="flex h-full w-[42px] shrink-0 justify-center pt-[20px]">
            <span className="h-[76px] w-[2px] bg-[#b0b0b0]" />
        </div>
        <DockItem><DocStack /></DockItem>
        <DockItem><Trash /></DockItem>
    </div>
);

export default function App() {
    return (
        <div className="flex h-[1800px] w-[2880px] flex-col overflow-hidden bg-[#333]">
            <MenuBar />
            <div className="flex h-[1644px] shrink-0">
                <div className="relative flex w-[2848px] shrink-0 flex-col overflow-hidden rounded-b-[14px] rounded-t-[16px] border-b-2 border-b-[#8a8a8a] border-l-2 border-l-[#333]">
                    <SafariChrome />
                    <FigmaBar />
                    <div className="flex min-h-0 flex-1">
                        <LeftPanel />
                        <Canvas />
                        <RightPanel />
                    </div>
                    <div className="pointer-events-none absolute inset-x-0 bottom-0 h-[70px] bg-linear-to-b from-transparent to-black/8" />
                </div>
                <BehindApp />
            </div>
            <div className="flex h-[110px] shrink-0">
                <div className="w-[24px] bg-[#333]" />
                <div className="w-[219px] bg-linear-to-b from-[#a4a4a4] to-[#dcdcdc]" />
                <Dock />
                <div className="w-[197px] bg-linear-to-b from-[#c4c4c4] to-[#f0f0f0]" />
                <div className="flex-1 bg-[#3a3a3a]" />
            </div>
        </div>
    );
}
